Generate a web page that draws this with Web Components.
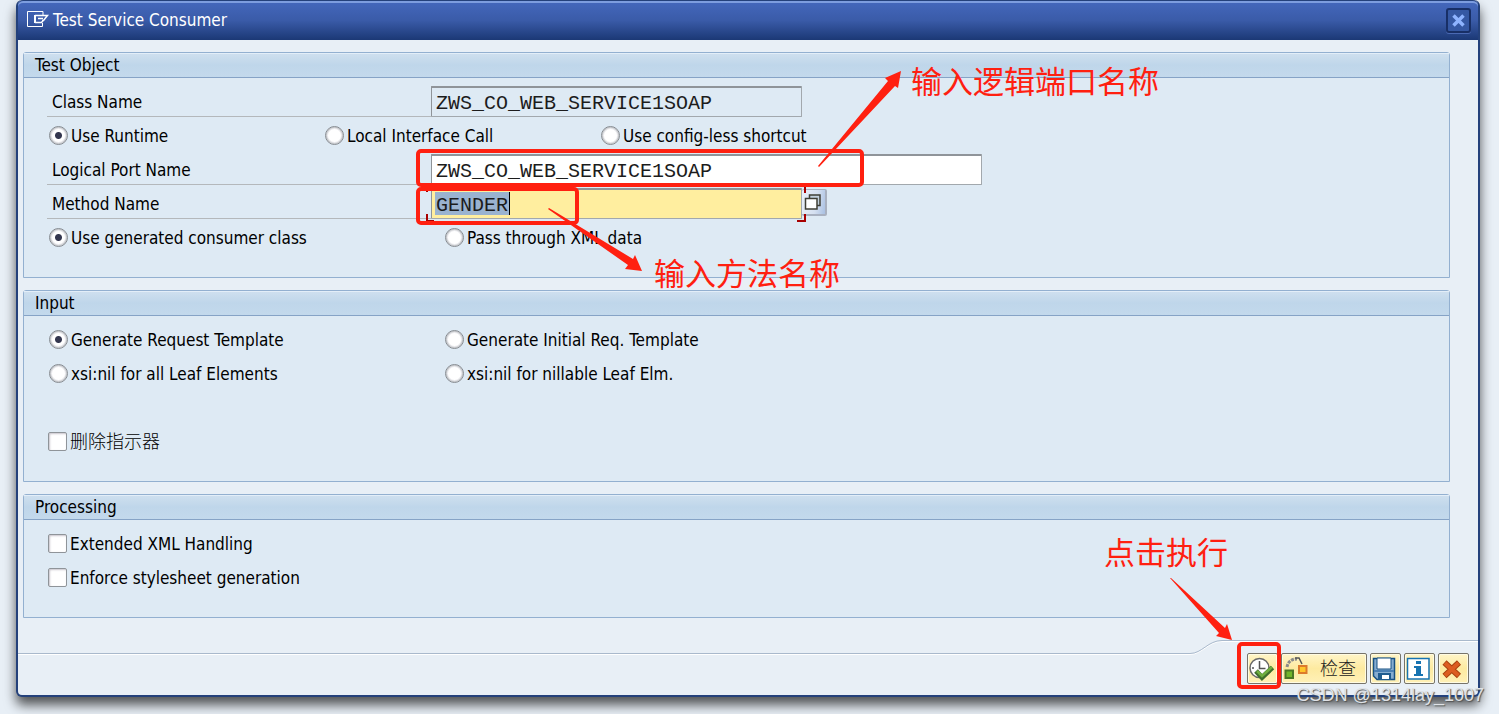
<!DOCTYPE html>
<html lang="en">
<head>
<meta charset="utf-8">
<title>Test Service Consumer</title>
<style>
  body { margin: 0; min-height: 100vh; background: #e8eff6; color: #000;
    font: 17px/22px "DejaVu Sans Condensed", "Noto Sans CJK SC", sans-serif; }
</style>
</head>
<body>
<sap-dialog>
  <span slot="title">Test Service Consumer</span>

  <sap-group>
    <span slot="title">Test Object</span>
    <sap-field label="Class Name" value="ZWS_CO_WEB_SERVICE1SOAP" kind="readonly"></sap-field>
    <sap-choices columns="276">
      <sap-choice checked>Use Runtime</sap-choice>
      <sap-choice>Local Interface Call</sap-choice>
      <sap-choice>Use config-less shortcut</sap-choice>
    </sap-choices>
    <sap-field label="Logical Port Name" value="ZWS_CO_WEB_SERVICE1SOAP" kind="wide"></sap-field>
    <sap-field label="Method Name" value="GENDER" kind="active"></sap-field>
    <sap-choices columns="396">
      <sap-choice checked>Use generated consumer class</sap-choice>
      <sap-choice>Pass through XML data</sap-choice>
    </sap-choices>
  </sap-group>

  <sap-group>
    <span slot="title">Input</span>
    <sap-choices columns="396">
      <sap-choice checked>Generate Request Template</sap-choice>
      <sap-choice>Generate Initial Req. Template</sap-choice>
    </sap-choices>
    <sap-choices columns="396">
      <sap-choice>xsi:nil for all Leaf Elements</sap-choice>
      <sap-choice>xsi:nil for nillable Leaf Elm.</sap-choice>
    </sap-choices>
    <sap-choices></sap-choices>
    <sap-choices><sap-choice type="checkbox" lang="zh">删除指示器</sap-choice></sap-choices>
  </sap-group>

  <sap-group>
    <span slot="title">Processing</span>
    <sap-choices><sap-choice type="checkbox">Extended XML Handling</sap-choice></sap-choices>
    <sap-choices><sap-choice type="checkbox">Enforce stylesheet generation</sap-choice></sap-choices>
  </sap-group>

  <sap-button slot="actions" icon="execute" label="Execute"></sap-button>
  <sap-button slot="actions" icon="check" label="Check">检查</sap-button>
  <sap-button slot="actions" icon="save" label="Save"></sap-button>
  <sap-button slot="actions" icon="info" label="Information"></sap-button>
  <sap-button slot="actions" icon="cancel" label="Cancel"></sap-button>

  <sap-notes slot="notes"></sap-notes>
</sap-dialog>

<script>
class Base extends HTMLElement {
  connectedCallback() {
    if (this.shadowRoot) return;
    this.attachShadow({ mode: "open" }).innerHTML = this.render();
  }
}

customElements.define("sap-dialog", class extends Base {
  render() {
    return `
<style>
  :host { display: block; padding: 0 19px 17px 16px; }
  .win { position: relative; box-sizing: border-box; border: 2px solid #24417b; border-top: 0;
    border-radius: 6px; background: #e8eff6; box-shadow: 0 8px 12px rgba(0,0,0,.65); }
  header { display: flex; align-items: center; box-sizing: border-box; height: 40px; padding: 0 7px 0 9px;
    border-top: 1px solid #24417b; border-radius: 5px 5px 0 0; color: #fff;
    box-shadow: inset 0 2px #7d9ddf;
    background: linear-gradient(#4468bd, #3a5ba8 50%, #1b3875); }
  h1 { margin: 0 auto 0 4px; font: inherit; line-height: 24px; padding-bottom: 2px; }
  header > svg { margin-bottom: 2px; }
  .close { width: 25px; height: 25px; padding: 0; border: 2px solid #182f66; border-radius: 3px;
    background: #3558a3; box-shadow: 0 1px #4a69b3; display: grid; place-items: center; }
  main { display: flex; flex-direction: column; gap: 12px; padding: 12px 28px 22px 5px; }
  footer { display: flex; height: 55px; }
  .low { flex: 1; margin-top: 13px; border-top: 1px solid #a9b9cc; box-shadow: inset 0 1px #fff; }
  .curve { flex: none; display: block; }
  .bar { box-sizing: border-box; width: 256px; border-top: 1px solid #a9b9cc; box-shadow: inset 0 1px #fff;
    display: flex; justify-content: flex-end; align-items: flex-end; gap: 3px; padding: 0 9px 11px 0; }
</style>
<section class="win" aria-label="Test Service Consumer">
  <header>
    <svg width="22" height="17" viewBox="0 0 22 17" fill="none" stroke="#fff">
      <path d="M16 4V.5H.5v15h15V12"/>
      <path d="M8 4.500H20.500L16.500 9.500H15M8 11.500H14.500L16.500 9" stroke-width="1.500"/>
      <path d="M8 4V12" stroke-width="2"/><path d="M11 7.500H16" stroke-width="1.500"/>
    </svg>
    <h1><slot name="title"></slot></h1>
    <button class="close" aria-label="Close">
      <svg width="13" height="13" viewBox="0 0 13 13"><path d="M1.500 1.500L11.500 11.500M11.500 1.500L1.500 11.500" stroke="#8fb4ff" stroke-width="3.500"/></svg>
    </button>
  </header>
  <main><slot></slot></main>
  <footer>
    <div class="low"></div>
    <svg class="curve" width="32" height="16" viewBox="0 0 32 16" fill="none">
      <path d="M0 14.500C12 14.500 18 1.500 32 1.500" stroke="#fff"/>
      <path d="M0 13.500C12 13.500 18 .5 32 .5" stroke="#a9b9cc"/>
    </svg>
    <div class="bar"><slot name="actions"></slot></div>
  </footer>
  <slot name="notes"></slot>
</section>`;
  }
});

customElements.define("sap-group", class extends Base {
  render() {
    return `
<style>
  :host { display: block; border: 1px solid #93b0d0; border-radius: 3px 3px 0 0; background: #deeaf4; }
  h2 { box-sizing: border-box; height: 25px; margin: 0; padding: 0 11px; font: inherit; line-height: 24px;
    border-bottom: 1px solid #86a3c6; box-shadow: inset 0 1px #e3eef8;
    background: linear-gradient(#cfe0ef, #bfd6ea 50%, #c3d9ec); }
  div { padding: 7px 0 22px 23px; }
</style>
<h2><slot name="title"></slot></h2>
<div><slot></slot></div>`;
  }
});

customElements.define("sap-choices", class extends Base {
  render() {
    const w = this.getAttribute("columns") || 396;
    return `
<style>
  :host { display: grid; grid-auto-flow: column; grid-auto-columns: ${w}px; align-items: center; height: 34px; }
</style>
<slot></slot>`;
  }
});

customElements.define("sap-choice", class extends Base {
  render() {
    const type = this.getAttribute("type") || "radio";
    return `
<style>
  :host { display: block; }
  label { display: flex; align-items: flex-start; gap: 3px; white-space: nowrap; }
  input { appearance: none; flex: none; box-sizing: border-box; width: 19px; height: 19px; margin: 1px 0 0;
    border: 1px solid #8f9499; background: #fff; box-shadow: inset 0 0 0 1px #d9d9dc; }
  [type=radio] { margin-left: 2px; border-radius: 50%; border-color: #858a90; box-shadow: inset 0 0 0 1px #c6c8cc, inset 0 0 0 2px #ececef; }
  [type=checkbox] { margin-left: 1px; border-radius: 2px; box-shadow: inset 1px 1px 2px #c8c4cc; }
  [type=radio]:checked { background: radial-gradient(circle, #34374f 3px, #fff 4px); }
  :host(:lang(zh)) span { font-size: 18px; font-weight: 300; }
</style>
<label><input type="${type}" ${this.hasAttribute("checked") ? "checked" : ""}><span><slot></slot></span></label>`;
  }
});

customElements.define("sap-field", class extends Base {
  render() {
    const kind = this.getAttribute("kind");
    const help = kind !== "active" ? "" : `
<button aria-label="Value help"><svg width="18" height="18" viewBox="0 0 18 18" stroke="#3f3f35" stroke-width="1.500">
  <path d="M5.500 2H16V12.500H5.500Z" fill="#c2d0dc"/><path d="M1.500 5.500H13V16H1.500Z" fill="#fff"/></svg></button>
<svg class="marks" width="382" height="36" viewBox="0 0 382 36" fill="none" stroke="#a80000" stroke-width="2">
  <path d="M2 0V5M2 27V34H9M380 0V6M380 27V34H372"/></svg>`;
    return `
<style>
  :host { display: flex; height: 34px; align-items: flex-start; position: relative; }
  label { box-sizing: border-box; width: 384px; height: 32px; padding: 0 5px; line-height: 34px;
    border-bottom: 1px solid #b4b8bb; }
  input { box-sizing: border-box; width: 371px; height: 31px; margin: 1px 0 0; padding: 2px 4px 0; border: 1px solid #a2a8ad;
    border-top: 2px solid #8f9499; border-left-color: #8f9499; border-radius: 1px; outline: 0; color: #1c1c1c;
    font: 20px/24px "Liberation Mono", monospace; background: #fff; }
  .readonly { background: #deeaf4; }
  .wide { width: 551px; }
  .active { background: linear-gradient(#000, #000) 77px 2px / 1px 23px no-repeat,
    linear-gradient(#9ab3d0, #9ab3d0) 3px 2px / 74px 23px no-repeat, #ffee9f; }
  button { box-sizing: border-box; width: 25px; height: 27px; margin: 2px 0 0; padding: 0 0 0 2px; display: grid; place-items: center start;
    border: 1px solid #a9b1c0; border-width: 1px 2px 2px 0; border-radius: 2px;
    background: linear-gradient(100deg, #e9eff8, #d5e0f0 60%, #a9c0e2); }
  .marks { position: absolute; left: 378px; top: 0; }
</style>
<label for="f">${this.getAttribute("label")}</label>
<input id="f" type="text" class="${kind}" value="${this.getAttribute("value")}" ${kind === "readonly" ? "readonly" : ""} spellcheck="false">${help}`;
  }
});

const ICONS = {
  execute: `<circle cx="12.500" cy="14" r="9.500" fill="#fff" stroke="#6a6a6a" stroke-width="1.500"/>
    <path d="M12.500 7V14.500H18.500M5 14H7M12.500 20V22" fill="none" stroke="#555" stroke-width="1.500"/>
    <path d="M9 17L15 23.500L25.500 13.500" fill="none" stroke="#3f6e2c" stroke-width="5"/>
    <path d="M10 17L15 22L25 13" fill="none" stroke="#6fae3f" stroke-width="2.500"/>`,
  check: `<path d="M6 13C7 8 10 5 16 5" fill="none" stroke="#8b8b8b" stroke-width="3" stroke-dasharray="3 1"/>
    <path d="M14 4H18L21 10" fill="none" stroke="#555" stroke-width="1.500"/>
    <path d="M4.500 16.500H12V24H4.500Z" fill="#72b52b" stroke="#4b7626" stroke-width="2"/>
    <path d="M18 12H25.500V19H18Z" fill="#ffc62a" stroke="#dc7a2c" stroke-width="2"/>`,
  save: `<path d="M3.500 4.500H24.500V25.500H7L3.500 22Z" fill="#86add0" stroke="#175082" stroke-width="1.500"/>
    <path d="M7 4H21V15H7Z" fill="#fff" stroke="#175082"/>
    <path d="M4 17H24" stroke="#4a80b4" stroke-width="2"/>
    <path d="M8 19H21V26H8Z" fill="#1f5c8f"/><path d="M12 21H19V25H12Z" fill="#fff"/>`,
  info: `<path d="M3.500 4.500H25V25H3.500Z" fill="#fff" stroke="#1673b1" stroke-width="1.500"/>
    <path d="M12 7H17V10H12ZM10 12H17V20H19V22H10V20H12V14H10Z" fill="#1673b1"/>`,
  cancel: `<path d="M6.500 8.500L21 22M21 8.500L6.500 22" stroke="#a8410f" stroke-width="6"/>
    <path d="M7 9L20.500 21.500M20.500 9L7 21.500" stroke="#dc5c20" stroke-width="4"/>`
};

customElements.define("sap-button", class extends Base {
  render() {
    const text = this.textContent.trim();
    return `
<style>
  :host { display: block; }
  button { box-sizing: border-box; display: flex; align-items: center; min-width: 31px; height: 31px; padding: 0 ${text ? 10 : 0}px 0 0;
    border: 1px solid #77746a; border-radius: 2px; color: #222; font: inherit; font-size: 18px; font-weight: 300;
    background: linear-gradient(#fff5c8, #fdeaa0 50%, #fff1b8); box-shadow: inset 0 0 0 1px #fffbe2; }
  svg { flex: none; margin: -1px ${text ? 9 : -2}px -1px -1px; }
</style>
<button aria-label="${this.getAttribute("label")}"><svg width="30" height="30" viewBox="0 0 30 30">${ICONS[this.getAttribute("icon")]}</svg><slot></slot></button>`;
  }
});

/* Review marks drawn over the dialog: frames, arrows and captions. */
customElements.define("sap-notes", class extends Base {
  render() {
    return `
<style>
  :host { position: absolute; inset: 0; pointer-events: none; color: #ff2010; fill: #ff2010; }
  .top, .end, p { position: absolute; margin: 0; }
  .top { left: 398px; top: 60px; }
  .end { right: 197px; bottom: 5px; }
  p { font: 400 31px/40px "Noto Sans CJK SC", sans-serif; white-space: nowrap; }
  .port { left: 893px; top: 60px; }
  .method { left: 636px; top: 252px; }
  .run { right: 250px; bottom: 124px; }
  .mark { right: -6px; bottom: -10px; font: 18px/20px "Liberation Sans", sans-serif; color: #dfe2e6;
    text-shadow: 1px 1px 1px #555; }
  rect { fill: none; stroke: #ff2010; stroke-width: 4px; }
</style>
<svg class="top" width="500" height="220" viewBox="416 60 500 220">
  <rect x="418" y="151" width="444" height="34" rx="3"/>
  <rect x="418" y="189" width="159" height="34" rx="3"/>
  <path d="M818 166L888 81L885 78L901 71L898 88L895 86L819 167Z"/>
  <path d="M548 209L549 208L633 259L635 255L642 271L625 269L628 265Z"/>
</svg>
<svg class="end" width="120" height="120" viewBox="1161 570 120 120">
  <rect x="1239" y="644" width="40" height="43" rx="3"/>
  <path d="M1170 578L1171 578L1225 628L1227 624L1232 640L1216 636L1219 633Z"/>
</svg>
<p class="port" lang="zh">输入逻辑端口名称</p>
<p class="method" lang="zh">输入方法名称</p>
<p class="run" lang="zh">点击执行</p>
<p class="mark">CSDN @1314lay_1007</p>`;
  }
});
</script>
</body>
</html>
